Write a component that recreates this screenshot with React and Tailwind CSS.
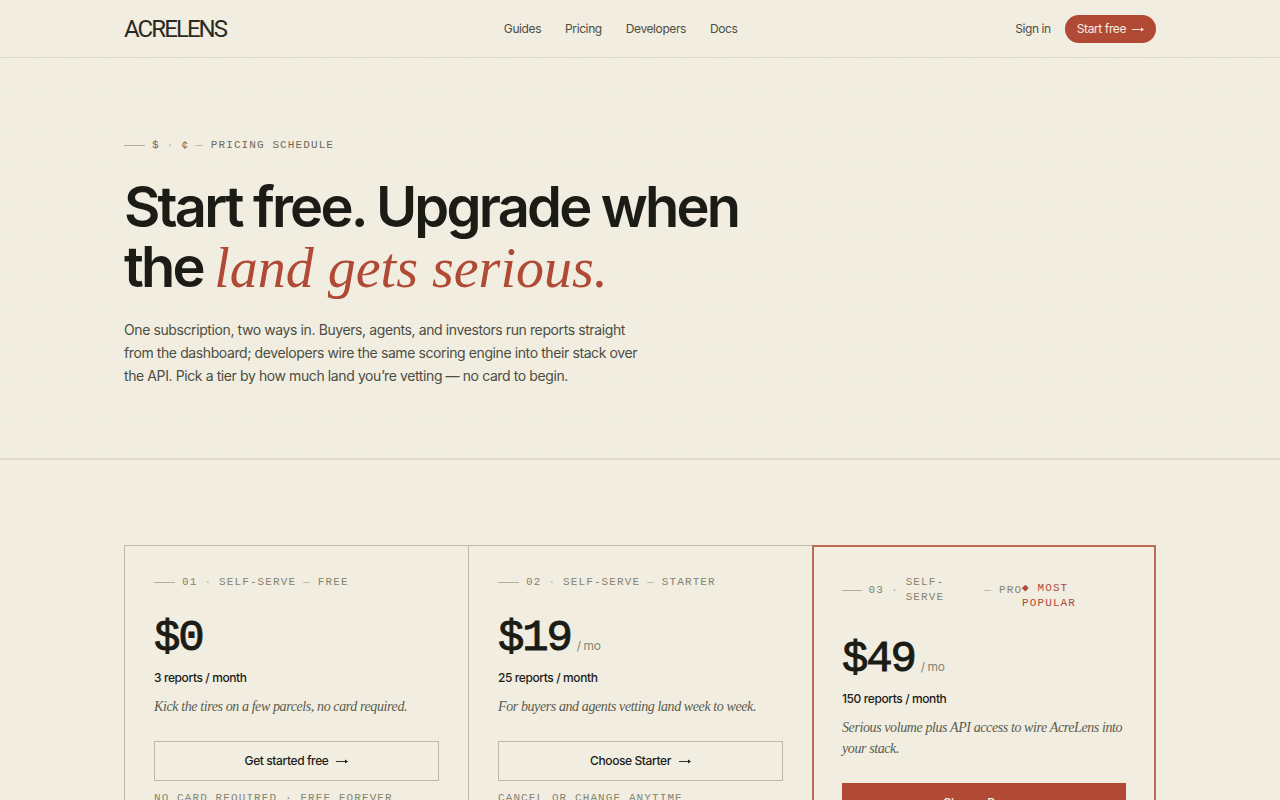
const navLinks = ["Guides", "Pricing", "Developers", "Docs"];

const plans = [
  {
    id: "free",
    label: ["01", "·", "Self-serve", "—", "Free"],
    price: "$0",
    reports: "3 reports / month",
    description: "Kick the tires on a few parcels, no card required.",
    action: "Get started free",
    note: "No card required · Free forever",
  },
  {
    id: "starter",
    label: ["02", "·", "Self-serve", "—", "Starter"],
    price: "$19",
    period: "/ mo",
    reports: "25 reports / month",
    description: "For buyers and agents vetting land week to week.",
    action: "Choose Starter",
    note: "Cancel or change anytime",
  },
  {
    id: "pro",
    label: ["03", "·", "Self-serve", "—", "Pro"],
    badge: "◆ Most popular",
    price: "$49",
    period: "/ mo",
    reports: "150 reports / month",
    description: "Serious volume plus API access to wire AcreLens into your stack.",
    action: "Choose Pro",
    featured: true,
  },
];

function Arrow() {
  return (
    <svg
      className="h-2 w-3 shrink-0"
      viewBox="0 0 12 8"
      fill="none"
      stroke="currentColor"
      strokeWidth="0.9"
      aria-hidden="true"
    >
      <path d="M0 4.5h11" />
      <path d="M9 2.5 12 4.5 9 6.5z" fill="currentColor" stroke="none" />
    </svg>
  );
}

function Eyebrow({ parts, className }) {
  return (
    <div
      className={`flex items-center gap-[7px] font-['Liberation_Mono',monospace] text-[11px] leading-[15px] tracking-widest uppercase ${className}`}
    >
      <span className="h-px w-[21px] bg-[#b3af9b]" />
      {parts.map((part, i) => (
        <span
          key={i}
          className={part === "·" || part === "—" ? "text-[#b3af9b]" : ""}
        >
          {part}
        </span>
      ))}
    </div>
  );
}

function Header() {
  return (
    <header className="border-b border-[#dedaca]">
      <div className="mx-auto flex h-[57px] max-w-[1080px] items-center justify-between px-6">
        <a
          href="#"
          className="font-['Roboto',sans-serif] text-2xl tracking-[-0.08em] text-[#2b2a22]"
        >
          ACRELENS
        </a>
        <nav className="flex gap-6 text-xs text-[#4d4e42]">
          {navLinks.map((link) => (
            <a key={link} href="#" className="hover:text-[#1b1c16]">
              {link}
            </a>
          ))}
        </nav>
        <div className="flex items-center gap-3.5 text-xs">
          <a href="#" className="text-[#4d4e42]">
            Sign in
          </a>
          <button className="flex h-7 items-center gap-1.5 rounded-full bg-[#b04a35] px-3 text-[#f6efe2]">
            Start free
            <Arrow />
          </button>
        </div>
      </div>
    </header>
  );
}

function Hero() {
  return (
    <section className="border-b-2 border-[#e0dccd] bg-[radial-gradient(circle_at_center,#ede9dd_1px,transparent_2px)] bg-[size:36px_36px] bg-[position:18px_18px]">
      <div className="mx-auto max-w-[1080px] px-6 pt-20 pb-[71px]">
        <Eyebrow
          parts={["$", "·", "¢", "—", "Pricing schedule"]}
          className="text-[#6b6b5c]"
        />
        <h1 className="mt-6 text-[56px] leading-[60px] font-semibold tracking-tighter text-[#1b1c16]">
          Start free. Upgrade when
          <br />
          the{" "}
          <em className="font-['Liberation_Serif',serif] font-normal tracking-normal text-[#b04a35]">
            land gets serious.
          </em>
        </h1>
        <p className="mt-5 max-w-[530px] text-sm leading-[23px] text-[#4d4e42]">
          One subscription, two ways in. Buyers, agents, and investors run
          reports straight from the dashboard; developers wire the same scoring
          engine into their stack over the API. Pick a tier by how much land
          you’re vetting — no card to begin.
        </p>
      </div>
    </section>
  );
}

function PlanCard({ plan }) {
  return (
    <article
      className={
        plan.featured
          ? "border-2 border-[#bd6a58] px-7 pt-7 pb-8"
          : "border-t border-l border-[#bdb9a6] px-[29px] pt-[29px] pb-8"
      }
    >
      <div className="flex items-baseline justify-between">
        <Eyebrow parts={plan.label} className="text-[#85846f]" />
        {plan.badge && (
          <span className="font-['Liberation_Mono',monospace] text-[11px] leading-[15px] tracking-widest text-[#b04a35] uppercase">
            {plan.badge}
          </span>
        )}
      </div>
      <div className="mt-6 flex items-baseline gap-1.5">
        <span className="font-['Liberation_Mono',monospace] text-[44px] leading-[48px] font-medium tracking-tighter text-[#1b1c16] [-webkit-text-stroke:1px_#1b1c16]">
          {plan.price}
        </span>
        {plan.period && (
          <span className="text-xs text-[#85846f]">{plan.period}</span>
        )}
      </div>
      <p className="mt-1.5 text-xs leading-5 font-medium text-[#1b1c16]">
        {plan.reports}
      </p>
      <p className="mt-2 font-['Liberation_Serif',serif] text-sm leading-[21px] text-[#5b5c4e] italic">
        {plan.description}
      </p>
      <button
        className={`mt-6 flex h-10 w-full items-center justify-center gap-2 border text-xs font-medium ${
          plan.featured
            ? "border-[#b04a35] bg-[#b04a35] text-[#f6efe2]"
            : "border-[#bdb9a6] text-[#1b1c16]"
        }`}
      >
        {plan.action}
        <Arrow />
      </button>
      {plan.note && (
        <p className="mt-2.5 font-['Liberation_Mono',monospace] text-[11px] leading-[15px] tracking-widest text-[#85846f] uppercase">
          {plan.note}
        </p>
      )}
    </article>
  );
}

export default function App() {
  return (
    <div className="min-h-screen bg-[#f1ede1] font-['Inter',sans-serif] tracking-tight">
      <Header />
      <main>
        <Hero />
        <section className="mx-auto max-w-[1080px] px-6 py-[85px]">
          <div className="grid grid-cols-3 border-b border-[#bdb9a6]">
            {plans.map((plan) => (
              <PlanCard key={plan.id} plan={plan} />
            ))}
          </div>
        </section>
      </main>
    </div>
  );
}
